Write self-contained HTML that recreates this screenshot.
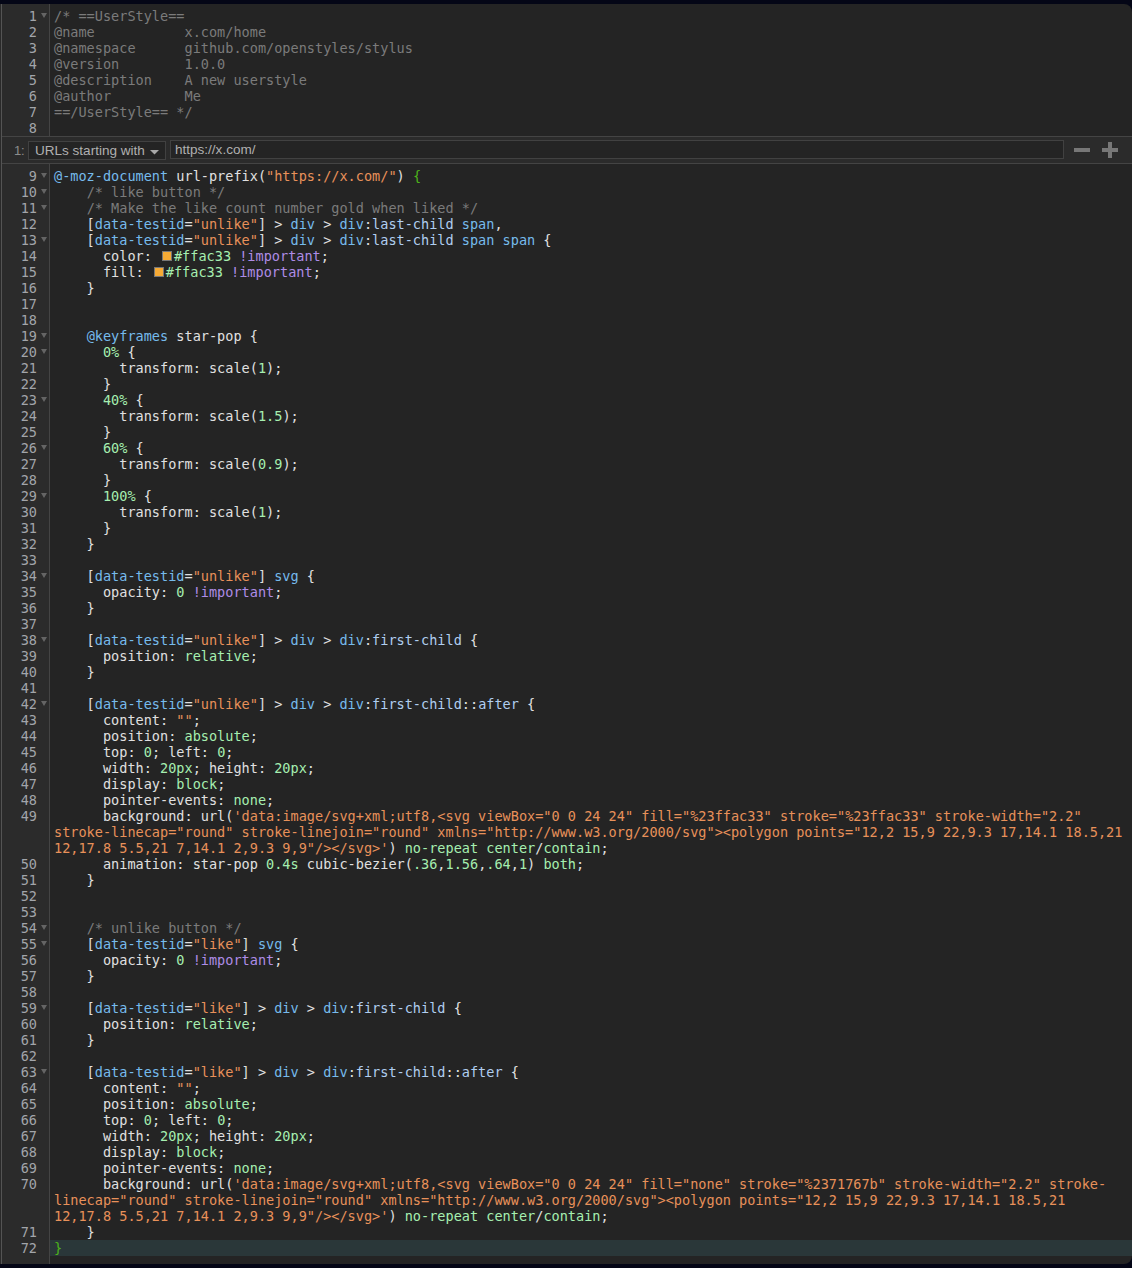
<!DOCTYPE html>
<html lang="en"><head><meta charset="utf-8"><title>x.com/home - Stylus</title>
<style>
html,body{margin:0;padding:0;background:#040616;}
body{width:1132px;height:1268px;overflow:hidden;position:relative;}
.ed{position:absolute;left:0;top:4px;width:1132px;height:1260px;background:#242424;border-radius:0 8px 8px 0;overflow:hidden;
 font-family:"DejaVu Sans Mono","Liberation Mono",monospace;font-size:13.555px;line-height:16px;color:#e0e0e0;}
.gut{position:absolute;left:0;top:0;width:49px;height:1260px;background:linear-gradient(90deg,#2a2a2a 1px,#545454 1px,#545454 2px,#2b2b2b 2px);border-right:1px solid #444;}
.blk{position:relative;padding:4px 0;}
.ln{position:relative;padding-left:54px;min-height:16px;}
.ln.act{background:linear-gradient(90deg,transparent 50px,#2a3739 50px);}
.ln pre{margin:0;font:inherit;white-space:pre;}
.no{position:absolute;left:0;top:0;width:37px;text-align:right;color:#a2a5aa;}
.fd{position:absolute;left:41px;top:5px;width:0;height:0;border-left:3px solid transparent;border-right:3px solid transparent;border-top:5px solid #646464;}
.c{color:#7b7b7b}.d{color:#76bbec}.s{color:#e8915a}.n{color:#a6efb0}.a{color:#a6efb0}.k{color:#ae8ce6}.m{color:#4db31a}.q{color:#b0cef0}
.sw{display:inline-block;width:8px;height:8px;border:1px solid #777;background:#f5aa35;margin:0 1.95px 0 2px;vertical-align:0px;}
.bar{position:relative;height:26px;border-top:1px solid #444;border-bottom:1px solid #444;background:#2b2b2b;margin-top:-4px;margin-left:2px;
 font-family:"Liberation Sans",Arial,sans-serif;font-size:13.54px;color:#b0b0b0;}
.bar .idx{position:absolute;left:12px;top:6px;line-height:16px;color:#8c8c8c;font-size:13px;letter-spacing:-0.3px;}
.bar .sel{position:absolute;left:26px;top:4px;width:136px;height:17px;border:1px solid #414141;background:#242424;}
.bar .selt{position:absolute;left:6px;top:1px;line-height:16px;white-space:nowrap;}
.bar .arr{position:absolute;left:121px;top:8px;}
.bar .inp{position:absolute;left:168px;top:3px;width:894px;height:19px;border:1px solid #414141;background:#242424;line-height:18px;padding-left:4px;box-sizing:border-box;}
.bar .mi{position:absolute;left:1072px;top:11px;width:16px;height:4px;background:#777;}
.bar .pl{position:absolute;left:1100px;top:11px;width:16px;height:4px;background:#777;}
.bar .pl:after{content:"";position:absolute;left:6px;top:-6px;width:4px;height:16px;background:#777;}

</style></head><body>
<div class="ed">
<div class="gut"></div>
<div class="blk">
<div class="ln"><span class="no">1</span><i class="fd"></i><pre><span class="c">/* ==UserStyle==</span></pre></div>
<div class="ln"><span class="no">2</span><pre><span class="c">@name           x.com/home</span></pre></div>
<div class="ln"><span class="no">3</span><pre><span class="c">@namespace      github.com/openstyles/stylus</span></pre></div>
<div class="ln"><span class="no">4</span><pre><span class="c">@version        1.0.0</span></pre></div>
<div class="ln"><span class="no">5</span><pre><span class="c">@description    A new userstyle</span></pre></div>
<div class="ln"><span class="no">6</span><pre><span class="c">@author         Me</span></pre></div>
<div class="ln"><span class="no">7</span><pre><span class="c">==/UserStyle== */</span></pre></div>
<div class="ln"><span class="no">8</span><pre></pre></div>
</div>
<div class="bar"><span class="idx">1:</span><span class="sel"><span class="selt">URLs starting with</span><svg class="arr" width="9" height="5" viewBox="0 0 9 5"><path d="M0 0h9L4.5 4.6z" fill="#a8a8a8"/></svg></span><span class="inp">https://x.com/</span><span class="mi"></span><span class="pl"></span></div>
<div class="blk">
<div class="ln"><span class="no">9</span><i class="fd"></i><pre><span class="d">@-moz-document</span> url-prefix(<span class="s">"https://x.com/"</span>) <span class="m">{</span></pre></div>
<div class="ln"><span class="no">10</span><i class="fd"></i><pre>    <span class="c">/* like button */</span></pre></div>
<div class="ln"><span class="no">11</span><i class="fd"></i><pre>    <span class="c">/* Make the like count number gold when liked */</span></pre></div>
<div class="ln"><span class="no">12</span><pre>    [<span class="d">data-testid</span>=<span class="s">"unlike"</span>] &gt; <span class="d">div</span> &gt; <span class="d">div</span>:<span class="q">last-child</span> <span class="d">span</span>,</pre></div>
<div class="ln"><span class="no">13</span><i class="fd"></i><pre>    [<span class="d">data-testid</span>=<span class="s">"unlike"</span>] &gt; <span class="d">div</span> &gt; <span class="d">div</span>:<span class="q">last-child</span> <span class="d">span</span> <span class="d">span</span> {</pre></div>
<div class="ln"><span class="no">14</span><pre>      color: <i class="sw"></i><span class="n">#ffac33</span> <span class="k">!important</span>;</pre></div>
<div class="ln"><span class="no">15</span><pre>      fill: <i class="sw"></i><span class="n">#ffac33</span> <span class="k">!important</span>;</pre></div>
<div class="ln"><span class="no">16</span><pre>    }</pre></div>
<div class="ln"><span class="no">17</span><pre></pre></div>
<div class="ln"><span class="no">18</span><pre></pre></div>
<div class="ln"><span class="no">19</span><i class="fd"></i><pre>    <span class="d">@keyframes</span> star-pop {</pre></div>
<div class="ln"><span class="no">20</span><i class="fd"></i><pre>      <span class="n">0%</span> {</pre></div>
<div class="ln"><span class="no">21</span><pre>        transform: scale(<span class="n">1</span>);</pre></div>
<div class="ln"><span class="no">22</span><pre>      }</pre></div>
<div class="ln"><span class="no">23</span><i class="fd"></i><pre>      <span class="n">40%</span> {</pre></div>
<div class="ln"><span class="no">24</span><pre>        transform: scale(<span class="n">1.5</span>);</pre></div>
<div class="ln"><span class="no">25</span><pre>      }</pre></div>
<div class="ln"><span class="no">26</span><i class="fd"></i><pre>      <span class="n">60%</span> {</pre></div>
<div class="ln"><span class="no">27</span><pre>        transform: scale(<span class="n">0.9</span>);</pre></div>
<div class="ln"><span class="no">28</span><pre>      }</pre></div>
<div class="ln"><span class="no">29</span><i class="fd"></i><pre>      <span class="n">100%</span> {</pre></div>
<div class="ln"><span class="no">30</span><pre>        transform: scale(<span class="n">1</span>);</pre></div>
<div class="ln"><span class="no">31</span><pre>      }</pre></div>
<div class="ln"><span class="no">32</span><pre>    }</pre></div>
<div class="ln"><span class="no">33</span><pre></pre></div>
<div class="ln"><span class="no">34</span><i class="fd"></i><pre>    [<span class="d">data-testid</span>=<span class="s">"unlike"</span>] <span class="d">svg</span> {</pre></div>
<div class="ln"><span class="no">35</span><pre>      opacity: <span class="n">0</span> <span class="k">!important</span>;</pre></div>
<div class="ln"><span class="no">36</span><pre>    }</pre></div>
<div class="ln"><span class="no">37</span><pre></pre></div>
<div class="ln"><span class="no">38</span><i class="fd"></i><pre>    [<span class="d">data-testid</span>=<span class="s">"unlike"</span>] &gt; <span class="d">div</span> &gt; <span class="d">div</span>:<span class="q">first-child</span> {</pre></div>
<div class="ln"><span class="no">39</span><pre>      position: <span class="a">relative</span>;</pre></div>
<div class="ln"><span class="no">40</span><pre>    }</pre></div>
<div class="ln"><span class="no">41</span><pre></pre></div>
<div class="ln"><span class="no">42</span><i class="fd"></i><pre>    [<span class="d">data-testid</span>=<span class="s">"unlike"</span>] &gt; <span class="d">div</span> &gt; <span class="d">div</span>:<span class="q">first-child</span>::<span class="q">after</span> {</pre></div>
<div class="ln"><span class="no">43</span><pre>      content: <span class="s">""</span>;</pre></div>
<div class="ln"><span class="no">44</span><pre>      position: <span class="a">absolute</span>;</pre></div>
<div class="ln"><span class="no">45</span><pre>      top: <span class="n">0</span>; left: <span class="n">0</span>;</pre></div>
<div class="ln"><span class="no">46</span><pre>      width: <span class="n">20px</span>; height: <span class="n">20px</span>;</pre></div>
<div class="ln"><span class="no">47</span><pre>      display: <span class="a">block</span>;</pre></div>
<div class="ln"><span class="no">48</span><pre>      pointer-events: <span class="a">none</span>;</pre></div>
<div class="ln"><span class="no">49</span><pre>      background: url(<span class="s">'data:</span><span class="s">image/svg+xml;utf8,&lt;svg viewBox="0 0 24 24" fill="%23ffac33" stroke="%23ffac33" stroke-width="2.2"</span>
<span class="s">stroke-linecap="round" stroke-linejoin="round" xmlns="http://www.w3.org/2000/svg"&gt;&lt;polygon points="12,2 15,9 22,9.3 17,14.1 18.5,21</span>
<span class="s">12,17.8 5.5,21 7,14.1 2,9.3 9,9"/&gt;&lt;/svg&gt;'</span>) <span class="a">no-repeat</span> <span class="a">center</span>/<span class="a">contain</span>;</pre></div>
<div class="ln"><span class="no">50</span><pre>      animation: star-pop <span class="n">0.4s</span> cubic-bezier(<span class="n">.36</span>,<span class="n">1.56</span>,<span class="n">.64</span>,<span class="n">1</span>) <span class="a">both</span>;</pre></div>
<div class="ln"><span class="no">51</span><pre>    }</pre></div>
<div class="ln"><span class="no">52</span><pre></pre></div>
<div class="ln"><span class="no">53</span><pre></pre></div>
<div class="ln"><span class="no">54</span><i class="fd"></i><pre>    <span class="c">/* unlike button */</span></pre></div>
<div class="ln"><span class="no">55</span><i class="fd"></i><pre>    [<span class="d">data-testid</span>=<span class="s">"like"</span>] <span class="d">svg</span> {</pre></div>
<div class="ln"><span class="no">56</span><pre>      opacity: <span class="n">0</span> <span class="k">!important</span>;</pre></div>
<div class="ln"><span class="no">57</span><pre>    }</pre></div>
<div class="ln"><span class="no">58</span><pre></pre></div>
<div class="ln"><span class="no">59</span><i class="fd"></i><pre>    [<span class="d">data-testid</span>=<span class="s">"like"</span>] &gt; <span class="d">div</span> &gt; <span class="d">div</span>:<span class="q">first-child</span> {</pre></div>
<div class="ln"><span class="no">60</span><pre>      position: <span class="a">relative</span>;</pre></div>
<div class="ln"><span class="no">61</span><pre>    }</pre></div>
<div class="ln"><span class="no">62</span><pre></pre></div>
<div class="ln"><span class="no">63</span><i class="fd"></i><pre>    [<span class="d">data-testid</span>=<span class="s">"like"</span>] &gt; <span class="d">div</span> &gt; <span class="d">div</span>:<span class="q">first-child</span>::<span class="q">after</span> {</pre></div>
<div class="ln"><span class="no">64</span><pre>      content: <span class="s">""</span>;</pre></div>
<div class="ln"><span class="no">65</span><pre>      position: <span class="a">absolute</span>;</pre></div>
<div class="ln"><span class="no">66</span><pre>      top: <span class="n">0</span>; left: <span class="n">0</span>;</pre></div>
<div class="ln"><span class="no">67</span><pre>      width: <span class="n">20px</span>; height: <span class="n">20px</span>;</pre></div>
<div class="ln"><span class="no">68</span><pre>      display: <span class="a">block</span>;</pre></div>
<div class="ln"><span class="no">69</span><pre>      pointer-events: <span class="a">none</span>;</pre></div>
<div class="ln"><span class="no">70</span><pre>      background: url(<span class="s">'data:</span><span class="s">image/svg+xml;utf8,&lt;svg viewBox="0 0 24 24" fill="none" stroke="%2371767b" stroke-width="2.2" stroke-</span>
<span class="s">linecap="round" stroke-linejoin="round" xmlns="http://www.w3.org/2000/svg"&gt;&lt;polygon points="12,2 15,9 22,9.3 17,14.1 18.5,21</span>
<span class="s">12,17.8 5.5,21 7,14.1 2,9.3 9,9"/&gt;&lt;/svg&gt;'</span>) <span class="a">no-repeat</span> <span class="a">center</span>/<span class="a">contain</span>;</pre></div>
<div class="ln"><span class="no">71</span><pre>    }</pre></div>
<div class="ln act"><span class="no">72</span><pre><span class="m">}</span></pre></div>
</div></div></body></html>
